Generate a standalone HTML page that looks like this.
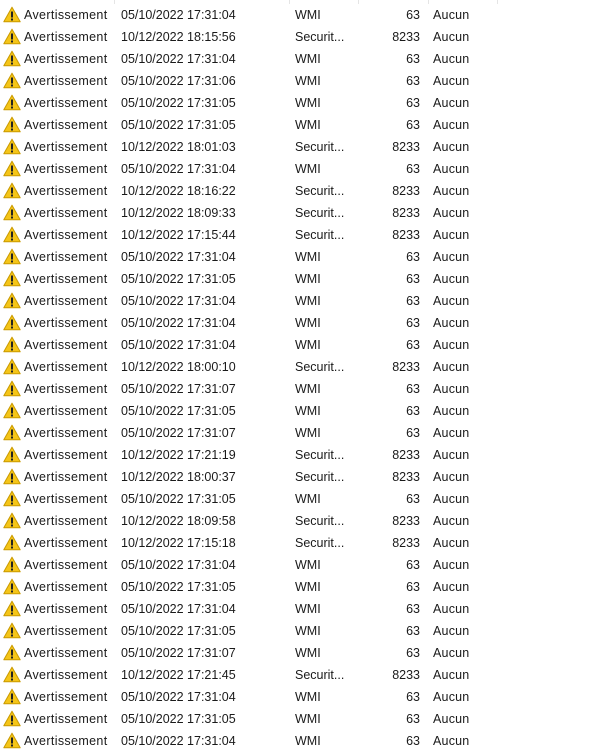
<!DOCTYPE html>
<html><head><meta charset="utf-8"><style>
html,body{margin:0;padding:0;background:#fff;width:613px;height:750px;overflow:hidden}
body{font-family:"Liberation Sans","DejaVu Sans",sans-serif;font-size:12.5px;color:#1a1a1a;position:relative}
.sep{position:absolute;top:0;width:1px;height:4px;background:#e5e5e5}
.r{position:absolute;left:0;height:22px;line-height:22px;width:613px;white-space:nowrap}
.r svg{position:absolute;left:3px;top:2px}
.a{position:absolute;left:24px;letter-spacing:0.35px}
.d{position:absolute;left:121px}
.s{position:absolute;left:295px}
.n{position:absolute;right:193px;text-align:right}
.c{position:absolute;left:433px;letter-spacing:0.2px}
</style></head><body>
<div class="sep" style="left:114px"></div><div class="sep" style="left:289px"></div><div class="sep" style="left:358px"></div><div class="sep" style="left:428px"></div><div class="sep" style="left:497px"></div>
<div id="rows"></div>
<script>
var data=[["05/10/2022 17:31:04",0],["10/12/2022 18:15:56",1],["05/10/2022 17:31:04",0],["05/10/2022 17:31:06",0],["05/10/2022 17:31:05",0],["05/10/2022 17:31:05",0],["10/12/2022 18:01:03",1],["05/10/2022 17:31:04",0],["10/12/2022 18:16:22",1],["10/12/2022 18:09:33",1],["10/12/2022 17:15:44",1],["05/10/2022 17:31:04",0],["05/10/2022 17:31:05",0],["05/10/2022 17:31:04",0],["05/10/2022 17:31:04",0],["05/10/2022 17:31:04",0],["10/12/2022 18:00:10",1],["05/10/2022 17:31:07",0],["05/10/2022 17:31:05",0],["05/10/2022 17:31:07",0],["10/12/2022 17:21:19",1],["10/12/2022 18:00:37",1],["05/10/2022 17:31:05",0],["10/12/2022 18:09:58",1],["10/12/2022 17:15:18",1],["05/10/2022 17:31:04",0],["05/10/2022 17:31:05",0],["05/10/2022 17:31:04",0],["05/10/2022 17:31:05",0],["05/10/2022 17:31:07",0],["10/12/2022 17:21:45",1],["05/10/2022 17:31:04",0],["05/10/2022 17:31:05",0],["05/10/2022 17:31:04",0]];
var ic='<svg width="18" height="17" viewBox="0 0 18 17"><path d="M9 1.2 L17.2 15.8 H0.8 Z" fill="#f5c518" stroke="#c99a00" stroke-width="1" stroke-linejoin="round"/><rect x="8" y="5.5" width="2" height="6" fill="#222"/><rect x="8" y="12.5" width="2" height="2" fill="#222"/></svg>';
var h='';
data.forEach(function(d,i){h+='<div class="r" style="top:'+(4+22*i)+'px">'+ic+'<span class="a">Avertissement</span><span class="d">'+d[0]+'</span><span class="s">'+(d[1]?'Securit...':'WMI')+'</span><span class="n">'+(d[1]?'8233':'63')+'</span><span class="c">Aucun</span></div>';});
document.getElementById('rows').innerHTML=h;
</script>
</body></html>
